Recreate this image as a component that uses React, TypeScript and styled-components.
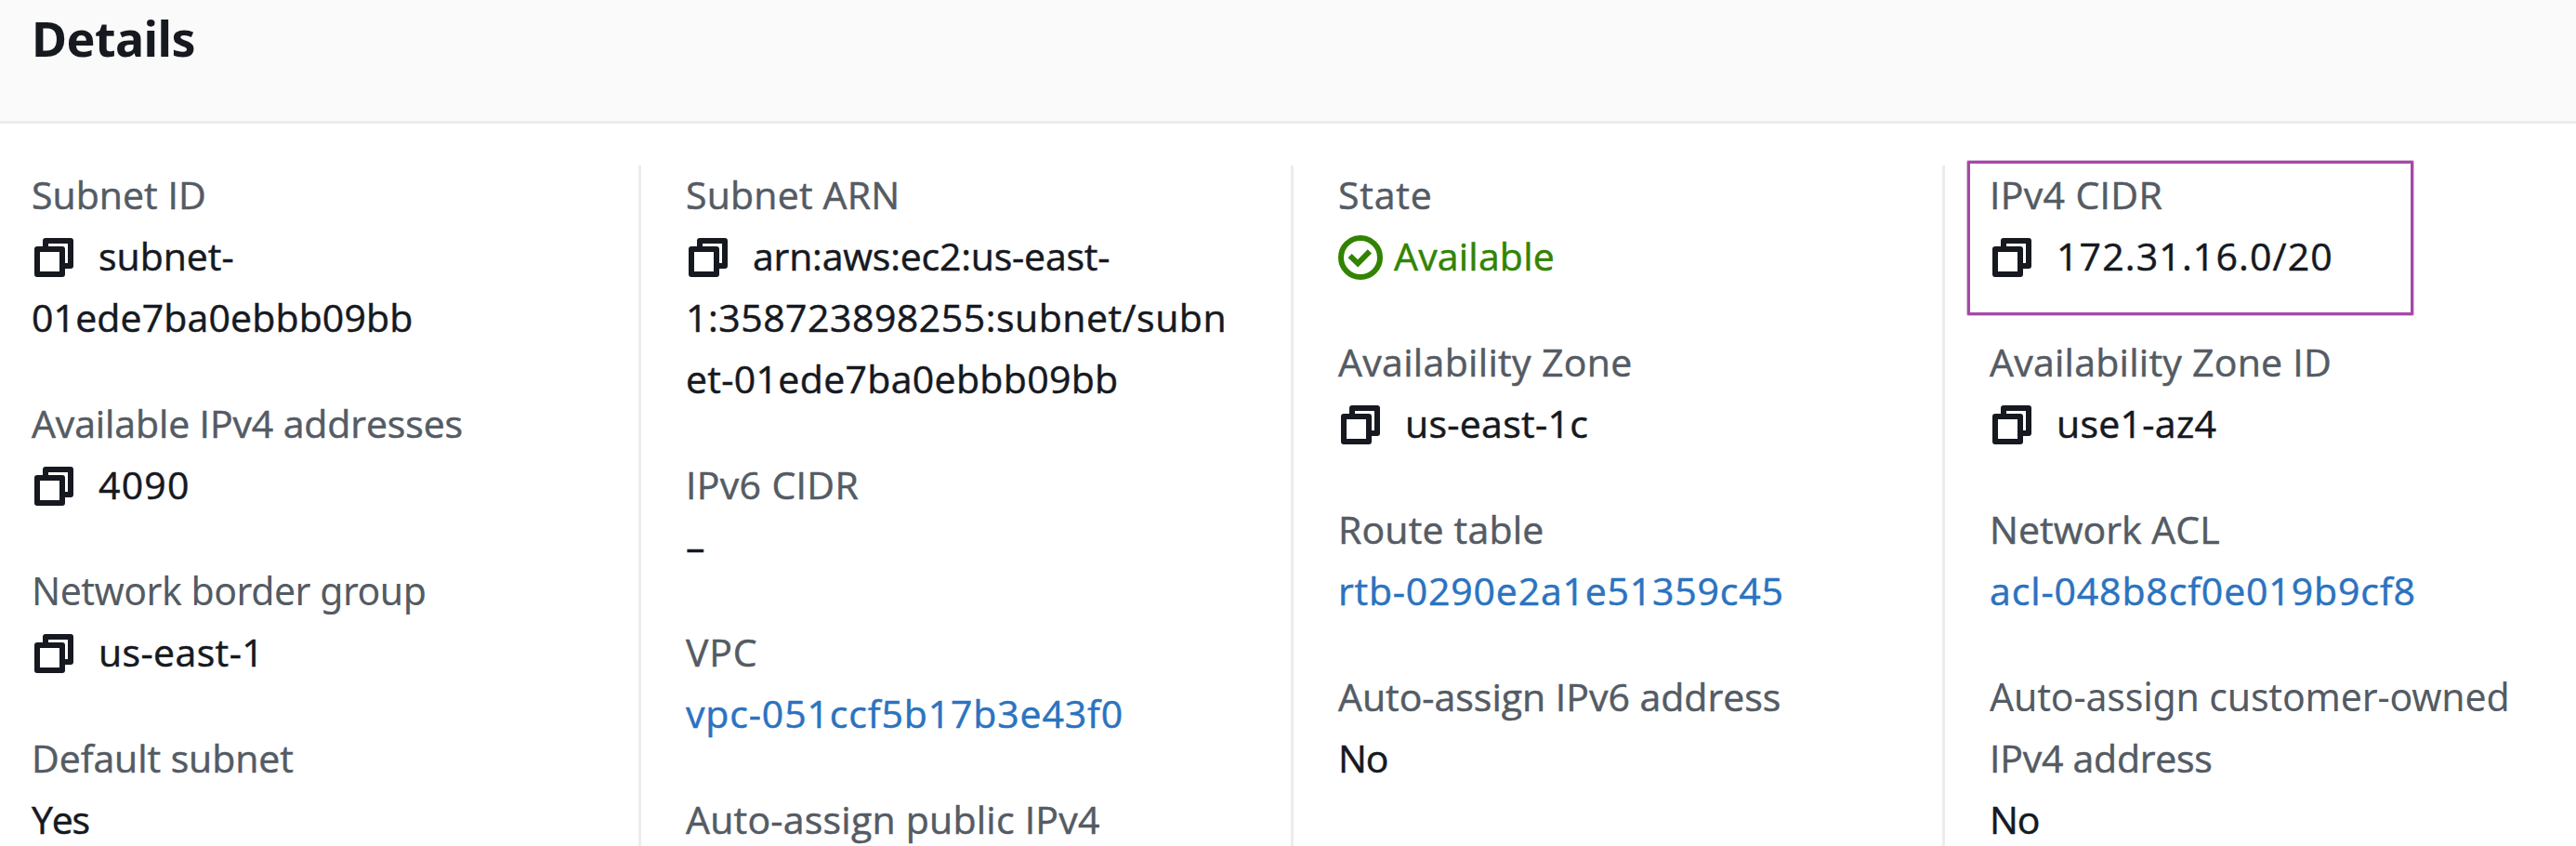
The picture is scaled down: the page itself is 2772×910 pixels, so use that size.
import React from "react";
import styled, { createGlobalStyle } from "styled-components";

const GlobalStyle = createGlobalStyle`
  * { box-sizing: border-box; }
  body { margin: 0; background: #ffffff; }
`;

const Panel = styled.section`
  display: flex;
  flex-direction: column;
  width: 100%;
  height: 910px;
  overflow: hidden;
  background: #ffffff;
  color: #16191f;
  font-family: "Open Sans", "Noto Sans", sans-serif;
  font-size: 41px;
  line-height: 66px;
`;

const Header = styled.header`
  flex: none;
  height: 133px;
  padding: 8px 34px 0;
  background: #fafafa;
  border-bottom: 3px solid #eaeded;
`;

const Title = styled.h2`
  margin: 0;
  font-family: "Noto Sans", sans-serif;
  font-size: 52px;
  font-weight: 700;
  line-height: 66px;
  letter-spacing: -0.56px;
`;

const Columns = styled.div`
  flex: 1;
  display: grid;
  grid-template-columns: 690px 702px 701px 1fr;
  padding-top: 45px;
  min-height: 0;
`;

const Column = styled.div`
  display: flex;
  flex-direction: column;
  gap: 48px;
  min-width: 0;
  padding-left: 48px;
  border-right: 3px solid #eaeded;

  > :first-child { margin-top: -2px; }
  &:first-child { padding-left: 34px; }
  &:last-child { border-right: 0; }
`;

const Field = styled.div`
  position: relative;
`;

type Tone = "label" | "value" | "link" | "success";

const tones: Record<Tone, string> = {
  label: "#545b64",
  value: "#16191f",
  link: "#2b73c0",
  success: "#318400",
};

const Line = styled.div<{ $tone: Tone; $track: number; $noto?: boolean }>`
  height: 66px;
  white-space: nowrap;
  color: ${(p) => tones[p.$tone]};
  letter-spacing: ${(p) => p.$track}px;
  ${(p) =>
    p.$noto
      ? 'font-family: "Noto Sans", sans-serif;'
      : "-webkit-text-stroke: 0.5px currentColor;"}
`;

const Icon = styled.svg<{ $gap: number }>`
  width: 48px;
  height: 48px;
  margin-right: ${(p) => p.$gap}px;
  vertical-align: -10px;
  fill: none;
  stroke: currentColor;
  stroke-width: 2;
`;

const Link = styled.a`
  color: inherit;
  text-decoration: none;
`;

const Highlight = styled.div`
  position: absolute;
  left: -24px;
  top: -3px;
  width: 480px;
  height: 166px;
  border: 3px solid #a549a5;
  border-radius: 1px;
  box-shadow: 0 0 0 1px rgba(165, 73, 165, 0.35);
  pointer-events: none;
`;

const CopyIcon = () => (
  <Icon viewBox="0 0 16 16" $gap={24} strokeLinejoin="round">
    <path d="M2 5h9v9H2z" />
    <path d="M5 5V2h9v9h-3" />
  </Icon>
);

const CheckIcon = () => (
  <Icon viewBox="0 0 16 16" $gap={12}>
    <circle cx="8" cy="8" r="7" />
    <path d="M4.2 7.35 7.07 10.1 11.3 5.8" />
  </Icon>
);

interface TextLine {
  text: string;
  track: number;
  noto?: boolean;
}

interface FieldData {
  label: TextLine[];
  value: TextLine[];
  icon?: "copy" | "check";
  tone?: Tone;
  highlighted?: boolean;
}

const t = (text: string, track: number, noto?: boolean): TextLine => ({ text, track, noto });

const columns: FieldData[][] = [
  [
    { label: [t("Subnet ID", 0.04)], value: [t("subnet-", -0.02), t("01ede7ba0ebbb09bb", 0.14)], icon: "copy" },
    { label: [t("Available IPv4 addresses", -0.12)], value: [t("4090", 1.2)], icon: "copy" },
    { label: [t("Network border group", -0.5, true)], value: [t("us-east-1", 0.4)], icon: "copy" },
    { label: [t("Default subnet", -0.06)], value: [t("Yes", -1.2)] },
  ],
  [
    {
      label: [t("Subnet ARN", 0.2)],
      value: [t("arn:aws:ec2:us-east-", -0.2), t("1:358723898255:subnet/subn", 0.51), t("et-01ede7ba0ebbb09bb", 0.33)],
      icon: "copy",
    },
    { label: [t("IPv6 CIDR", 0.34)], value: [t("–", 0)] },
    { label: [t("VPC", 0.85)], value: [t("vpc-051ccf5b17b3e43f0", 0.86)], tone: "link" },
    { label: [t("Auto-assign public IPv4", 0.24)], value: [] },
  ],
  [
    { label: [t("State", 0.8)], value: [t("Available", 0.2)], icon: "check", tone: "success" },
    { label: [t("Availability Zone", 0.33)], value: [t("us-east-1c", 0.3)], icon: "copy" },
    { label: [t("Route table", 0.2)], value: [t("rtb-0290e2a1e51359c45", 0.8)], tone: "link" },
    { label: [t("Auto-assign IPv6 address", 0)], value: [t("No", -1.2)] },
  ],
  [
    { label: [t("IPv4 CIDR", 0.34)], value: [t("172.31.16.0/20", 1.15)], icon: "copy", highlighted: true },
    { label: [t("Availability Zone ID", 0.26)], value: [t("use1-az4", 0.3)], icon: "copy" },
    { label: [t("Network ACL", 0.06)], value: [t("acl-048b8cf0e019b9cf8", 0.87)], tone: "link" },
    { label: [t("Auto-assign customer-owned", -0.18, true), t("IPv4 address", -0.24)], value: [t("No", -1.2)] },
  ],
];

const DetailField = ({ label, value, icon, tone = "value", highlighted }: FieldData) => (
  <Field>
    {label.map((l) => (
      <Line key={l.text} $tone="label" $track={l.track} $noto={l.noto}>
        {l.text}
      </Line>
    ))}
    {value.map((l, i) => (
      <Line key={l.text} $tone={tone} $track={l.track} $noto={l.noto}>
        {i === 0 && icon === "copy" && <CopyIcon />}
        {i === 0 && icon === "check" && <CheckIcon />}
        {tone === "link" ? <Link href="#">{l.text}</Link> : l.text}
      </Line>
    ))}
    {highlighted && <Highlight />}
  </Field>
);

export default function App() {
  return (
    <>
      <GlobalStyle />
      <Panel>
        <Header>
          <Title>Details</Title>
        </Header>
        <Columns>
          {columns.map((fields, i) => (
            <Column key={i}>
              {fields.map((f) => (
                <DetailField key={f.label[0].text} {...f} />
              ))}
            </Column>
          ))}
        </Columns>
      </Panel>
    </>
  );
}
